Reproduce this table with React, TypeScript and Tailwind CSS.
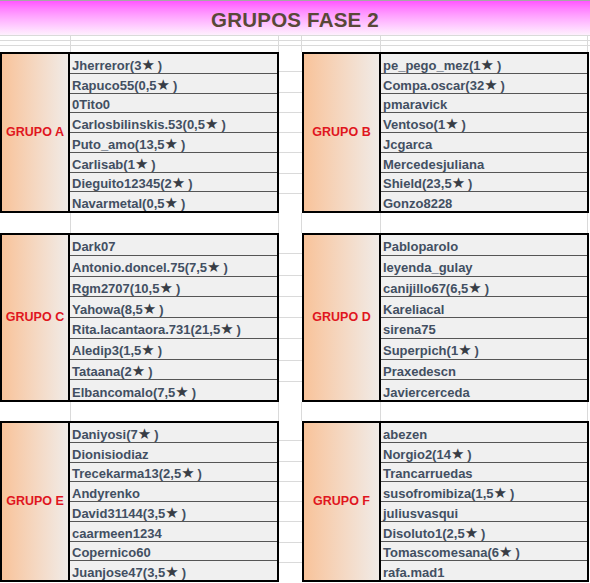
import React from "react";

type Group = { name: string; players: string[] };

const S = "★";

const bands: { left: Group; right: Group; h: number }[] = [
  {
    h: 161,
    left: {
      name: "GRUPO A",
      players: [
        `Jherreror(3${S})`,
        `Rapuco55(0,5${S})`,
        "0Tito0",
        `Carlosbilinskis.53(0,5${S})`,
        `Puto_amo(13,5${S})`,
        `Carlisab(1${S})`,
        `Dieguito12345(2${S})`,
        `Navarmetal(0,5${S})`,
      ],
    },
    right: {
      name: "GRUPO B",
      players: [
        `pe_pego_mez(1${S})`,
        `Compa.oscar(32${S})`,
        "pmaravick",
        `Ventoso(1${S})`,
        "Jcgarca",
        "Mercedesjuliana",
        `Shield(23,5${S})`,
        "Gonzo8228",
      ],
    },
  },
  {
    h: 169,
    left: {
      name: "GRUPO C",
      players: [
        "Dark07",
        `Antonio.doncel.75(7,5${S})`,
        `Rgm2707(10,5${S})`,
        `Yahowa(8,5${S})`,
        `Rita.lacantaora.731(21,5${S})`,
        `Aledip3(1,5${S})`,
        `Tataana(2${S})`,
        `Elbancomalo(7,5${S})`,
      ],
    },
    right: {
      name: "GRUPO D",
      players: [
        "Pabloparolo",
        "leyenda_gulay",
        `canijillo67(6,5${S})`,
        "Kareliacal",
        "sirena75",
        `Superpich(1${S})`,
        "Praxedescn",
        "Javiercerceda",
      ],
    },
  },
  {
    h: 161,
    left: {
      name: "GRUPO E",
      players: [
        `Daniyosi(7${S})`,
        "Dionisiodiaz",
        `Trecekarma13(2,5${S})`,
        "Andyrenko",
        `David31144(3,5${S})`,
        "caarmeen1234",
        "Copernico60",
        `Juanjose47(3,5${S})`,
      ],
    },
    right: {
      name: "GRUPO F",
      players: [
        "abezen",
        `Norgio2(14${S})`,
        "Trancarruedas",
        `susofromibiza(1,5${S})`,
        "juliusvasqui",
        `Disoluto1(2,5${S})`,
        `Tomascomesana(6${S})`,
        "rafa.mad1",
      ],
    },
  },
];

function Player({ text }: { text: string }) {
  const parts = text.split(S);
  if (parts.length === 1) return <>{text}</>;
  return (
    <>
      {parts[0]}
      <span className="font-['DejaVu_Sans'] text-[15px] leading-none text-[#383d45] mr-[3px]">{S}</span>
      {parts[1]}
    </>
  );
}

function Block({ g, labelW, w }: { g: Group; labelW: string; w: string }) {
  return (
    <div className={`${w} h-full border-2 border-black flex box-border`}>
      <div
        className={`${labelW} h-full border-r-2 border-black bg-gradient-to-r from-[#f8c39a] to-[#f0ebe7] flex items-center justify-center`}
      >
        <span className="text-[12.5px] font-bold text-[#e0161e] font-['Liberation_Sans']">{g.name}</span>
      </div>
      <div className="flex-1 flex flex-col bg-[#f0f0f0]">
        {g.players.map((p, i) => (
          <div
            key={i}
            className={`flex-1 flex items-center pl-[2px] text-[13px] font-bold text-[#424f62] whitespace-nowrap ${
              i < 7 ? "border-b border-[#555555]" : ""
            }`}
          >
            <span className="relative top-[2px] leading-none flex items-baseline">
              <Player text={p} />
            </span>
          </div>
        ))}
      </div>
    </div>
  );
}

function GridRow({ h, top = true }: { h: string; top?: boolean }) {
  return (
    <div className={`${h} grid grid-cols-[71px_208px_23px_79px_207px_2px] ${top ? "border-t border-[#dadada]" : ""}`}>
      <div className="border-r border-[#dadada]" />
      <div className="border-r border-[#dadada]" />
      <div className="border-r border-[#dadada]" />
      <div className="border-r border-[#dadada]" />
      <div className="border-r border-[#dadada]" />
      <div />
    </div>
  );
}

function Gap() {
  return (
    <div className="w-[23px] h-full flex flex-col">
      {Array.from({ length: 8 }).map((_, i) => (
        <div key={i} className={`flex-1 ${i < 7 ? "border-b border-[#dadada]" : ""}`} />
      ))}
    </div>
  );
}

export default function App() {
  return (
    <div className="w-[590px] h-[583px] bg-white overflow-hidden font-['Liberation_Sans',sans-serif] flex flex-col">
      <div className="h-[35px] shrink-0 border-t border-[#a6a6a6] bg-gradient-to-b from-[#ff55ff] to-[#fdf0fd] flex items-center justify-center">
        <span className="text-[20.5px] font-bold text-[#594838] tracking-[0.2px] mt-[4px]">GRUPOS FASE 2</span>
      </div>
      <GridRow h="h-[5px] shrink-0" />
      <GridRow h="h-[5px] shrink-0" />
      <GridRow h="h-[7px] shrink-0" />
      {bands.map((b, i) => (
        <React.Fragment key={i}>
          {i > 0 && <GridRow h={i === 1 ? "h-[20px] shrink-0" : "h-[19px] shrink-0"} top={false} />}
          <div className="flex shrink-0" style={{ height: b.h }}>
            <Block g={b.left} labelW="w-[68px]" w="w-[279px]" />
            <Gap />
            <Block g={b.right} labelW="w-[77px]" w="w-[287px]" />
            <div className="w-[1px]" />
          </div>
        </React.Fragment>
      ))}
    </div>
  );
}
